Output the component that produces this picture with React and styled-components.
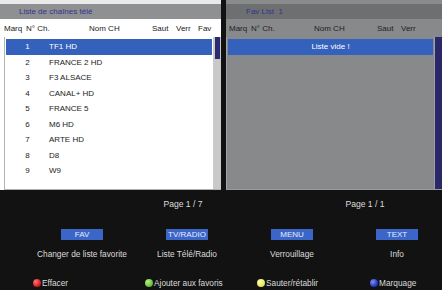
import React from "react";
import styled, { createGlobalStyle } from "styled-components";

const Global = createGlobalStyle`
  html, body { margin: 0; padding: 0; background: #121212; overflow: hidden; }
  body { font-family: "Liberation Sans", Arial, sans-serif; }
`;

const Screen = styled.div`
  width: 442px;
  height: 290px;
  background: #121212;
  display: flex;
  flex-direction: column;
  font-family: "Liberation Sans", Arial, sans-serif;
`;

const Panels = styled.div`
  display: flex;
  gap: 5px;
  height: 190px;
`;

const Panel = styled.div`
  width: ${(p) => p.$w}px;
  display: flex;
  flex-direction: column;
  background: ${(p) => (p.$dark ? "#88898b" : "#ffffff")};
`;

const TopStrip = styled.div`
  height: 4px;
  background: ${(p) => (p.$dark ? "#8a8b8d" : "#e9e9e9")};
`;

const TitleBar = styled.div`
  height: 15px;
  line-height: 15px;
  padding-left: ${(p) => p.$pad}px;
  background: ${(p) => (p.$dark ? "#6e6f71" : "#8f9092")};
  color: #33338f;
  font-size: 8px;
  white-space: pre;
`;

const HeaderRow = styled.div`
  height: 18px;
  display: flex;
  align-items: center;
  padding-left: ${(p) => p.$pad}px;
  font-size: 8px;
  color: ${(p) => (p.$dark ? "#1e1e1e" : "#222")};
  white-space: nowrap;
`;

const HeadCell = styled.span`
  width: ${(p) => (p.$w ? `${p.$w}px` : "auto")};
  flex: none;
`;

const ListBox = styled.div`
  flex: 1;
  display: flex;
  margin-left: ${(p) => p.$ml}px;
  border-left: 1px solid ${(p) => (p.$dark ? "#a2a3a5" : "#b4b4b4")};
  border-bottom: 1px solid ${(p) => (p.$dark ? "#9a9b9d" : "#b0b0b0")};
`;

const Rows = styled.div`
  flex: 1;
  padding: 2px 1px 0 1px;
  display: flex;
  flex-direction: column;
`;

const Row = styled.div`
  height: 15.5px;
  flex: none;
  display: flex;
  align-items: center;
  font-size: 8px;
  background: ${(p) => (p.$sel ? "#3461bb" : "transparent")};
  color: ${(p) => (p.$sel ? "#ffffff" : "#222")};
  justify-content: ${(p) => (p.$center ? "center" : "flex-start")};
  white-space: nowrap;
`;

const NumCell = styled.span`
  width: 43px;
  text-align: center;
  flex: none;
`;

const NameCell = styled.span`
  padding-left: 0;
`;

const Track = styled.div`
  width: ${(p) => p.$w}px;
  flex: none;
  background: ${(p) => p.$bg};
  border-left: ${(p) => (p.$edge ? `1px solid ${p.$edge}` : "none")};
  display: flex;
  flex-direction: column;
  align-items: center;
`;

const Thumb = styled.div`
  width: 5px;
  height: 22px;
  background: #2c2a70;
`;

const Bottom = styled.div`
  flex: 1;
  display: flex;
  flex-direction: column;
  color: #dcdcdc;
  font-size: 8.3px;
`;

const PageRow = styled.div`
  display: flex;
  margin-top: 7px;
  height: 13px;
  align-items: center;
  padding-left: 143px;
  gap: 102px;
  font-size: 8.6px;
`;

const PageLabel = styled.span`
  width: 80px;
  text-align: center;
`;

const KeyRow = styled.div`
  display: flex;
  gap: 15px;
  padding-left: 37px;
  margin-top: ${(p) => p.$mt}px;
  height: ${(p) => p.$h}px;
  align-items: center;
  white-space: nowrap;
`;

const KeyCell = styled.div`
  width: 90px;
  flex: none;
  display: flex;
  justify-content: center;
`;

const KeyButton = styled.div`
  width: 42px;
  height: 11px;
  background: #3b65c7;
  color: #e6ecff;
  font-size: 8px;
  line-height: 11px;
  text-align: center;
`;

const LegendRow = styled.div`
  display: grid;
  grid-template-columns: 112px 112px 113px 1fr;
  padding-left: 33px;
  margin-top: 17px;
  height: 12px;
  align-items: center;
  white-space: nowrap;
`;

const LegendItem = styled.div`
  display: flex;
  align-items: center;
  gap: 1px;
`;

const Dot = styled.span`
  width: 8px;
  height: 8px;
  border-radius: 50%;
  flex: none;
  background: radial-gradient(circle at 35% 35%, ${(p) => p.$hi} 0%, ${(p) => p.$c} 60%, ${(p) => p.$lo} 100%);
`;

const channels = [
  "TF1 HD",
  "FRANCE 2 HD",
  "F3 ALSACE",
  "CANAL+ HD",
  "FRANCE 5",
  "M6 HD",
  "ARTE HD",
  "D8",
  "W9",
];

const keys = [
  { k: "FAV", l: "Changer de liste favorite" },
  { k: "TV/RADIO", l: "Liste Télé/Radio" },
  { k: "MENU", l: "Verrouillage" },
  { k: "TEXT", l: "Info" },
];

const legend = [
  { c: "#d81e1e", hi: "#ff7a7a", lo: "#a01010", t: "Effacer" },
  { c: "#6cc43a", hi: "#b8f08a", lo: "#3f8a1e", t: "Ajouter aux favoris" },
  { c: "#eaea50", hi: "#ffffc0", lo: "#b8b820", t: "Sauter/rétablir" },
  { c: "#2a3cb8", hi: "#7f90ff", lo: "#141c70", t: "Marquage" },
];

function Header({ pad, fav, dark }) {
  return (
    <HeaderRow $pad={pad} $dark={dark}>
      <HeadCell $w={22}>Marq</HeadCell>
      <HeadCell $w={63}>N° Ch.</HeadCell>
      <HeadCell $w={63}>Nom CH</HeadCell>
      <HeadCell $w={24}>Saut</HeadCell>
      <HeadCell $w={22}>Verr</HeadCell>
      {fav && <HeadCell>Fav</HeadCell>}
    </HeaderRow>
  );
}

export default function App() {
  return (
    <Screen>
      <Global />
      <Panels>
        <Panel $w={221}>
          <TopStrip />
          <TitleBar $pad={19}>Liste de chaînes télé</TitleBar>
          <Header pad={4} fav />
          <ListBox $ml={4}>
            <Rows>
              {channels.map((name, i) => (
                <Row key={name} $sel={i === 0}>
                  <NumCell>{i + 1}</NumCell>
                  <NameCell>{name}</NameCell>
                </Row>
              ))}
            </Rows>
            <Track $w={8} $bg="#c9c9c9">
              <Thumb />
            </Track>
          </ListBox>
        </Panel>
        <Panel $w={216} $dark>
          <TopStrip $dark />
          <TitleBar $pad={20} $dark>Fav List  1</TitleBar>
          <Header pad={3} dark />
          <ListBox $ml={0} $dark>
            <Rows>
              <Row $sel $center>Liste vide !</Row>
            </Rows>
            <Track $w={7} $bg="#2b2868" $edge="#9c9db0" />
          </ListBox>
        </Panel>
      </Panels>
      <Bottom>
        <PageRow>
          <PageLabel>Page 1 / 7</PageLabel>
          <PageLabel>Page 1 / 1</PageLabel>
        </PageRow>
        <KeyRow $mt={19} $h={11}>
          {keys.map((k) => (
            <KeyCell key={k.k}>
              <KeyButton>{k.k}</KeyButton>
            </KeyCell>
          ))}
        </KeyRow>
        <KeyRow $mt={8} $h={12}>
          {keys.map((k) => (
            <KeyCell key={k.k}>{k.l}</KeyCell>
          ))}
        </KeyRow>
        <LegendRow>
          {legend.map((l) => (
            <LegendItem key={l.t}>
              <Dot $c={l.c} $hi={l.hi} $lo={l.lo} />
              <span>{l.t}</span>
            </LegendItem>
          ))}
        </LegendRow>
      </Bottom>
    </Screen>
  );
}
